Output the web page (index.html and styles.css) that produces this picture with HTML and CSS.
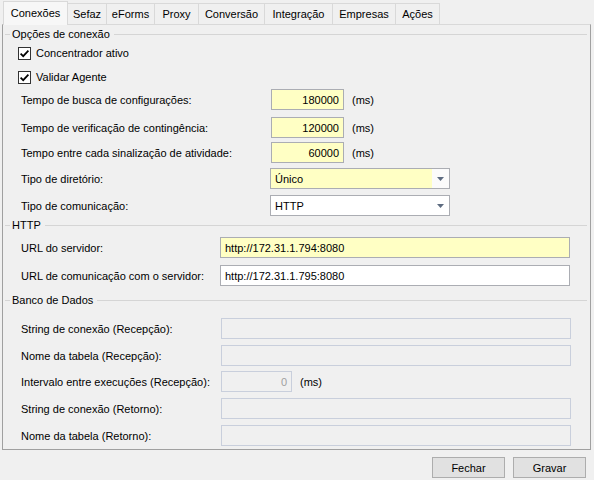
FILE: index.html
```html
<!DOCTYPE html>
<html lang="pt">
<head>
<meta charset="utf-8">
<title>Configurações</title>
<link rel="stylesheet" href="styles.css">
</head>
<body>
<div class="window">
  <div class="tabs">
    <div class="tab active t1">Conexões</div>
    <div class="tab t2">Sefaz</div>
    <div class="tab t3">eForms</div>
    <div class="tab t4">Proxy</div>
    <div class="tab t5">Conversão</div>
    <div class="tab t6">Integração</div>
    <div class="tab t7">Empresas</div>
    <div class="tab t8">Ações</div>
  </div>
  <div class="panel">
    <div class="group-head"><span class="lead"></span><span class="gtitle">Opções de conexão</span><span class="line"></span></div>
    <div class="check-row cr1">
      <svg class="cb" width="13" height="13" viewBox="0 0 13 13"><rect x="0.5" y="0.5" width="12" height="12" fill="#fff" stroke="#333"/><path d="M2.6 6.6 L5.2 9.2 L10.4 3.6" fill="none" stroke="#000" stroke-width="1.7"/></svg>
      <span>Concentrador ativo</span>
    </div>
    <div class="check-row cr2">
      <svg class="cb" width="13" height="13" viewBox="0 0 13 13"><rect x="0.5" y="0.5" width="12" height="12" fill="#fff" stroke="#333"/><path d="M2.6 6.6 L5.2 9.2 L10.4 3.6" fill="none" stroke="#000" stroke-width="1.7"/></svg>
      <span>Validar Agente</span>
    </div>
    <div class="row r-a1"><span class="lbl w1">Tempo de busca de configurações:</span><div class="input num yellow">180000</div><span class="unit">(ms)</span></div>
    <div class="row r-a2"><span class="lbl w1">Tempo de verificação de contingência:</span><div class="input num yellow">120000</div><span class="unit">(ms)</span></div>
    <div class="row r-a3"><span class="lbl w1">Tempo entre cada sinalização de atividade:</span><div class="input num yellow">60000</div><span class="unit">(ms)</span></div>
    <div class="row r-a4"><span class="lbl w1c">Tipo de diretório:</span><div class="combo yellow"><span class="cval">Único</span><span class="cbtn"><svg width="7" height="4" viewBox="0 0 7 4"><path d="M0 0 H7 L3.5 4 Z" fill="#5d6b80"/></svg></span></div></div>
    <div class="row r-a5"><span class="lbl w1c">Tipo de comunicação:</span><div class="combo white"><span class="cval">HTTP</span><span class="cbtn"><svg width="7" height="4" viewBox="0 0 7 4"><path d="M0 0 H7 L3.5 4 Z" fill="#5d6b80"/></svg></span></div></div>

    <div class="group-head gh2"><span class="lead"></span><span class="gtitle">HTTP</span><span class="line"></span></div>
    <div class="row r-b1"><span class="lbl w2">URL do servidor:</span><div class="input url yellow">http://172.31.1.794:8080</div></div>
    <div class="row r-b2"><span class="lbl w2">URL de comunicação com o servidor:</span><div class="input url white">http://172.31.1.795:8080</div></div>

    <div class="group-head gh3"><span class="lead"></span><span class="gtitle">Banco de Dados</span><span class="line"></span></div>
    <div class="row r-c1"><span class="lbl w3">String de conexão (Recepção):</span><div class="input wide disabled"></div></div>
    <div class="row r-c2"><span class="lbl w3">Nome da tabela (Recepção):</span><div class="input wide disabled"></div></div>
    <div class="row r-c3"><span class="lbl w3">Intervalo entre execuções (Recepção):</span><div class="input small disabled num">0</div><span class="unit">(ms)</span></div>
    <div class="row r-c4"><span class="lbl w3">String de conexão (Retorno):</span><div class="input wide disabled"></div></div>
    <div class="row r-c5"><span class="lbl w3">Nome da tabela (Retorno):</span><div class="input wide disabled"></div></div>
  </div>
  <div class="buttons">
    <button class="btn">Fechar</button>
    <button class="btn">Gravar</button>
  </div>
</div>
</body>
</html>
```
FILE: styles.css
```css
html, body {
  margin: 0;
  padding: 0;
  background: #f0f0f0;
}
body {
  font-family: "Liberation Sans", Arial, sans-serif;
  font-size: 11px;
  color: #000;
  width: 594px;
  height: 480px;
  overflow: hidden;
  white-space: nowrap;
}
.window {
  padding-top: 1px;
}
.tabs {
  display: flex;
  height: 23px;
  padding-left: 3px;
  align-items: flex-end;
  position: relative;
  z-index: 2;
}
.tab {
  box-sizing: border-box;
  height: 21px;
  border: 1px solid #d9d9d9;
  border-bottom: none;
  border-left: none;
  background: #f0f0f0;
  display: flex;
  align-items: center;
  justify-content: center;
  color: #000;
}
.tab.active {
  height: 24px;
  margin-bottom: -1px;
  border: 1px solid #d9d9d9;
  border-bottom: none;
  background: #f7f7f7;
  padding-bottom: 2px;
}
.t1 { width: 65px; }
.t2 { width: 39px; }
.t3 { width: 48px; }
.t4 { width: 44px; }
.t5 { width: 66px; }
.t6 { width: 68px; }
.t7 { width: 63px; }
.t8 { width: 44px; }

.panel {
  box-sizing: border-box;
  margin-left: 2px;
  width: 589px;
  height: 426px;
  border: 1px solid #a0a0a0;
  border-top-color: #d9d9d9;
  position: relative;
  z-index: 1;
}
.group-head {
  display: flex;
  align-items: center;
  height: 18px;
  padding-right: 3px;
}
.group-head .lead {
  width: 5px;
  height: 1px;
  margin-left: 2px;
  background: #d5d5d5;
}
.group-head .gtitle {
  padding: 0 4px 0 2px;
}
.group-head .line {
  flex: 1;
  height: 1px;
  background: #d5d5d5;
}
.check-row {
  display: flex;
  align-items: center;
  height: 20px;
  padding-left: 15px;
}
.check-row .cb {
  margin-right: 5px;
}
.cr2 { margin-top: 4px; }

.row {
  display: flex;
  align-items: center;
  height: 21px;
  padding-left: 18px;
}
.lbl { flex: none; }
.w1 { width: 250px; }
.w1c { width: 249px; }
.w2 { width: 199px; }
.w3 { width: 200px; }

.input {
  box-sizing: border-box;
  height: 21px;
  border: 1px solid #abadb3;
  display: flex;
  align-items: center;
  padding: 0 4px;
  white-space: nowrap;
}
.input.num {
  width: 73px;
  justify-content: flex-end;
}
.input.url { width: 350px; }
.input.wide { width: 350px; }
.input.small { width: 71px; }
.yellow { background: #ffffc4; }
.white { background: #fff; }
.disabled {
  background: #f0f0f0;
  border-color: #c9cfdc;
  color: #a0a0a0;
}
.unit { margin-left: 8px; }

.combo {
  box-sizing: border-box;
  width: 180px;
  height: 21px;
  border: 1px solid #abadb3;
  display: flex;
}
.combo .cval {
  flex: 1;
  display: flex;
  align-items: center;
  padding-left: 4px;
}
.combo .cbtn {
  width: 17px;
  background: #fbfbfb;
  display: flex;
  align-items: center;
  justify-content: center;
}
.combo.white .cbtn { background: #fff; }

.r-a1 { margin-top: 2px; }
.r-a2 { margin-top: 7px; }
.r-a3 { margin-top: 4px; }
.r-a4 { margin-top: 5px; }
.r-a5 { margin-top: 6px; }
.r-b1 { margin-top: 3px; }
.r-b2 { margin-top: 7px; }
.gh3 { margin-top: 5px; }
.r-c1 { margin-top: 9px; }
.r-c2 { margin-top: 6px; }
.r-c3 { margin-top: 5px; }
.r-c4 { margin-top: 6px; }
.r-c5 { margin-top: 6px; }

.buttons {
  display: flex;
  justify-content: flex-end;
  gap: 8px;
  padding: 7px 8px 0 0;
}
.btn {
  box-sizing: border-box;
  width: 73px;
  height: 21px;
  border: 1px solid #adadad;
  background: #e1e1e1;
  font-family: "Liberation Sans", Arial, sans-serif;
  font-size: 11px;
  color: #000;
  padding: 0;
}
```
